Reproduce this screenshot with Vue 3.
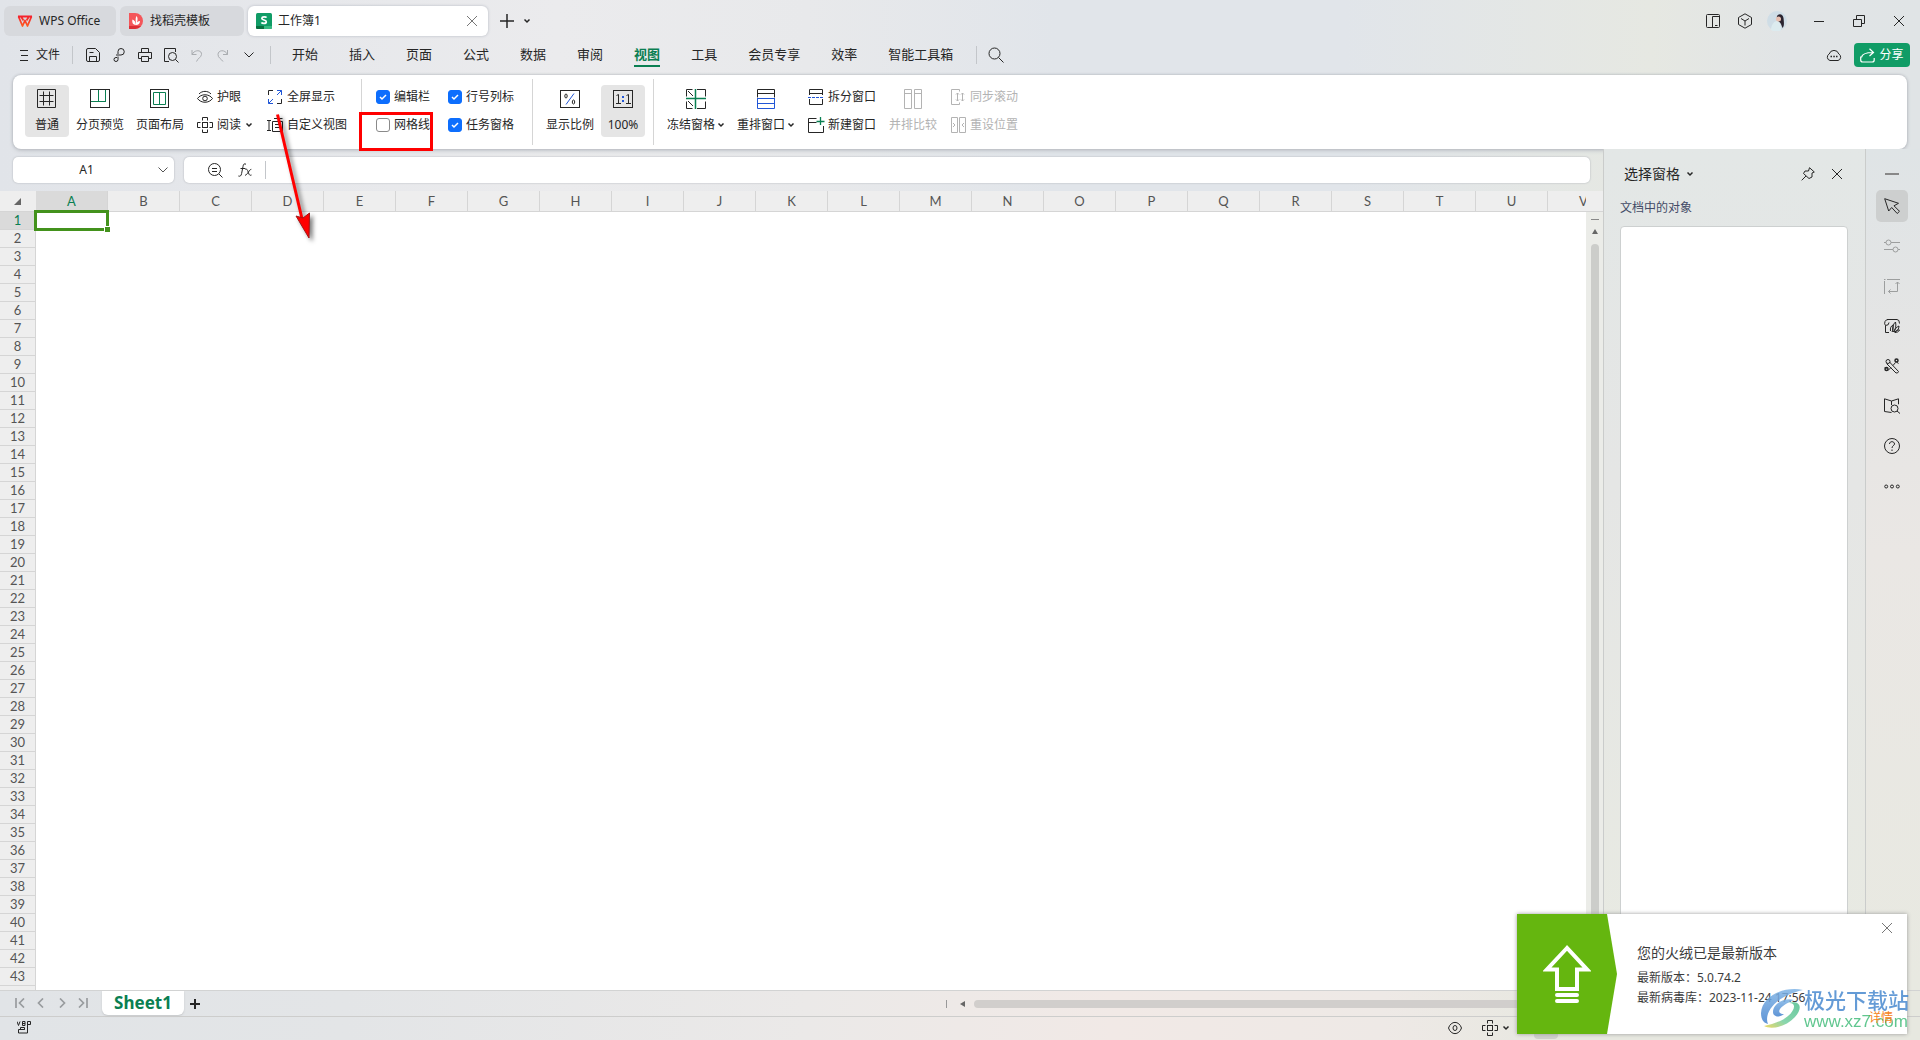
<script setup>
import { h, ref } from 'vue'

const G = '#0a7f52'
const B = '#2156d6'

// name -> [width, height, markup]
const icons = {
  wps: [16, 14, '<defs><linearGradient id="wg" x1="0" y1="0" x2="0" y2="1"><stop offset="0" stop-color="#f5222d"/><stop offset="1" stop-color="#ff5a1f"/></linearGradient></defs><path d="M1 2.500h14M1.500 2.500l4 9.500L8 6.500l2.500 5.500 4-9.500M4 2.500l2.500 4M12 2.500l-2.500 4" stroke="url(#wg)" stroke-width="1.800" stroke-linejoin="round"/>'],
  docer: [16, 16, '<path d="M1 0h6a8 8 0 0 1 0 16H1z" fill="#f4565a" stroke="none"/><path d="M1 13h12a8 8 0 0 1-6 3H1z" fill="#dc2f36" stroke="none"/><path d="M8 12C4 12 4 8 4.500 6.500 6.500 7 7.500 9 8 12zM8 12c0-4-1-6 .5-9C10 4.500 10 8 8 12zM8 12c.5-3 2-4 4-4 0 2.500-1.500 4-4 4z" fill="#fff" stroke="none"/>'],
  sheet: [16, 16, '<rect width="16" height="16" rx="1.500" fill="#109c66" stroke="none"/><path d="M0 13h8v3H1.500A1.500 1.500 0 0 1 0 14.500z" fill="#07703f" stroke="none"/><path d="M8 13h8v1.500a1.500 1.500 0 0 1-1.500 1.500H8z" fill="#37b981" stroke="none"/><path d="M10.500 4.700C10 3.600 6 3.200 5.800 5.300 5.700 7.500 10.400 6.600 10.300 8.900 10.200 11 6 10.700 5.500 9.400" stroke="#fff" stroke-width="1.700"/>'],
  x: [12, 12, '<path d="M1 1l10 10M11 1L1 11"/>'],
  plus: [14, 14, '<path d="M7 0v14M0 7h14" stroke-width="1.500"/>'],
  plusBold: [10, 10, '<path d="M5 0v10M0 5h10" stroke-width="2"/>'],
  down: [8, 6, '<path d="M1.500 1.500L4 4l2.500-2.500" stroke-width="1.500"/>'],
  downWide: [10, 6, '<path d="M.5.5L5 5 9.500.5"/>'],
  burger: [8, 12, '<path d="M0 1.500h8M1 6.500h7M0 11.500h8"/>'],
  save: [14, 14, '<path d="M.5 12V2Q.5.5 2 .5h7.500l4 4V12q0 1.500-1.500 1.500H2Q.5 13.500.5 12zM3.500 13V8.500h7V13M3.500 4.500h4"/>'],
  link: [12, 14, '<path d="M4 9.500H3A2 2 0 1 0 5 11.500V8.500M5 6V3.500Q5 .5 8 .5a3 3 0 0 1 0 6.500H3"/>'],
  print: [14, 14, '<path d="M3.500 4V.5h7V4M3.500 10.500H.5v-6h13v6h-3M3.500 8.500h7v5h-7z"/>'],
  preview: [15, 15, '<path d="M5 13.500H.5V.5h11V4"/><circle cx="8.500" cy="8.500" r="4"/><path d="M11.500 11.500l3 3"/>'],
  undo: [12, 13, '<path d="M1 1v4.500h4.500M1 5.500C4 0 11 1 10.500 5.500 10 8.500 7 9 5.500 12.500"/>'],
  redo: [12, 13, '<path d="M10.500 1v4.500H6M10.500 5.500C8 0 1 1 1 5.500 1 9 4 9.500 6 12.500"/>'],
  search: [16, 16, '<circle cx="6.500" cy="6.500" r="5.500"/><path d="M10.500 10.500l5 5"/>'],
  panels: [14, 14, '<rect x=".5" y=".5" width="13" height="13" rx="1"/><path d="M6.500 13.500v-11h7M9 11.500h2.500"/>'],
  cube: [16, 16, '<path d="M8 .8l6.500 3.700v7L8 15.200 1.500 11.500v-7zM4 5.500L8 8l4-2.500M8 8v4.500"/>'],
  avatar: [20, 20, '<circle cx="10" cy="10" r="10" fill="#cfdde6" stroke="none"/><path d="M4 19c0-5 3-9 6-9s4 5 4 9.200A10 10 0 0 1 4 19z" fill="#dcebef" stroke="none"/><path d="M10 5c2-3 6-2 6.500 2s1 8-1 10c-1-2-1-4-3-6-2-1-3-3-2.500-6z" fill="#2b2430" stroke="none"/><circle cx="11.500" cy="8" r="2.500" fill="#e7bfb0" stroke="none"/>'],
  min: [10, 10, '<path d="M0 5.500h10"/>'],
  restore: [12, 12, '<path d="M.5 4.500h8v7h-8zM3.500 4V.5h8v8H9"/>'],
  cloud: [16, 14, '<path d="M4 12.500a3.500 3.500 0 0 1-.8-6.500 5 5 0 0 1 9.600 0 3.500 3.500 0 0 1-.8 6.500z"/><path d="M4.500 8.500h1.500M7.300 8.500h1.500M10 8.500h1.500" stroke-width="1.500"/>'],
  share: [15, 15, '<path d="M.7 8.500v3.500q0 2 2 2h9.500q2 0 2-2v-2M1.500 9.500C2 5.500 6 4.500 13 4.500M9.500.7l4 3.800-4 3.500" stroke-width="1.200"/>'],
  grid: [20, 20, '<path d="M.5.5h18v18H.5zM6.500 2.500v14M12.500 2.500v14M2.500 6.500h14M2.500 12.500h14"/>'],
  pageBreak: [20, 20, `<rect x=".5" y=".5" width="19" height="18"/><path d="M8.500 1v11M15.500 1v11M1 12.500h15" stroke="${G}"/>`],
  pageLayout: [20, 20, `<rect x=".5" y=".5" width="18" height="18"/><path d="M3.500 3.500h12v12h-12zM9.500 3.500v12" stroke="${G}"/>`],
  eyeCare: [16, 14, '<path d="M.5 8.500C4 3.500 12 3.500 15.500 8.500 12 13.500 4 13.500.5 8.500zM2 4C5 .5 11 .5 14 4"/><circle cx="8" cy="8.500" r="2.300"/>'],
  cross: [16, 16, '<rect x="5.500" y="5.500" width="5" height="5"/><path d="M5.500 3.500v-3h5v3M5.500 12.500v3h5v-3M3.500 5.500h-3v5h3M12.500 5.500h3v5h-3"/>'],
  full: [14, 14, `<path d="M.5 5V.5H5M9 13.500h4.500V9"/><path d="M9 .5h4.500V5M13.500.5L9 5M5 13.500H.5V9M.5 13.500L5 9" stroke="${B}"/>`],
  custom: [16, 14, '<path d="M0 2.500h4M2 2.500v10M0 12.500h4M5.500 3.500h10v10h-10zM7 .5h8.500M8 6.500h5M8 9.500h5"/>'],
  percent: [20, 18, `<rect x=".5" y=".5" width="19" height="17"/><path d="M14 3.500L6 14.500" stroke="${B}"/><ellipse cx="6" cy="6" rx="1.200" ry="2"/><ellipse cx="13.500" cy="12" rx="1.200" ry="2"/>`],
  oneone: [20, 18, `<rect x=".5" y=".5" width="19" height="17"/><path d="M3.500 5.500l2-1v9M3 13.500h5M13.500 5.500l2-1v9M13 13.500h5"/><path d="M10 6v2M10 10v2" stroke="${B}" stroke-width="2"/>`],
  freeze: [20, 20, `<path d="M.5 7.500v-7h6M11 .5h8.500v7M.5 12.500v7h6M11 19.500h8.500v-7M2 2l5 5M2 12l5 5"/><path d="M9.500 0v20M0 9.500h20" stroke="${G}" stroke-width="1.500"/>`],
  arrange: [18, 20, `<path d="M.5 8.500v-8h17v8M.5 4.500h17"/><path d="M0 9.500h18M.5 9.500v10h17v-10M.5 14.500h17" stroke="${B}"/>`],
  split: [16, 16, `<path d="M1.500 6V.5h13V6M1.500 4.500h13M1.500 10v5.500h13V10"/><path d="M0 8.500h16" stroke="${B}" stroke-dasharray="3 1"/>`],
  newWin: [17, 16, `<path d="M8.500 1.500h-8v14h15V9M.5 5.500h8"/><path d="M12.500 0v8M8.500 4.500h8" stroke="${G}" stroke-width="1.300"/>`],
  compare: [18, 20, '<path d="M.5.5h7v19h-7zM10.500.5h7v19h-7zM.5 4.500h7M10.500 4.500h7"/>'],
  sync: [14, 16, '<path d="M8.500 2.500v-2h-8v15h8v-2M6.500 4v8M5 5.500L6.500 4 8 5.500M5 10.500L6.500 12 8 10.500M11.500 4v8M10 5.500L11.500 4 13 5.500M10 10.500l1.500 1.500 1.500-1.500"/>'],
  reset: [15, 16, '<path d="M.5.5h6v15h-6zM8.500.5h6v15h-6zM2 6l2 2-2 2M13 6l-2 2 2 2"/>'],
  zoomOut: [15, 15, '<circle cx="6.500" cy="6.500" r="6"/><path d="M4 5.500h5M4 8.500h5M11 11l3.500 3.500"/>'],
  fx: [14, 14, '<path d="M8 1.200C6 .2 5.300 1.500 5 3.500L3.600 10.500C3.200 13 2 13.600.4 13M2.500 5.500h5M7.500 6.500c2-1 2 1 3 3.500s1.500 2.500 3 2M13.300 6.300c-2 0-3.800 5.700-6.300 6"/>'],
  corner: [8, 7, '<path d="M7 0v7H0z" fill="#666" stroke="none"/>'],
  up: [6, 5, '<path d="M3 0l3 5H0z" fill="#666" stroke="none"/>'],
  left: [5, 6, '<path d="M0 3l5-3v6z" fill="#666" stroke="none"/>'],
  pin: [14, 14, '<path d="M8.500.7l4.800 4.300-2.300 1L11 10l-3 1.500L2.500 6.500 4 4h3.500zM5 9L.7 13.300"/>'],
  minus: [14, 4, '<path d="M0 2h14" stroke="#888" stroke-width="2"/>'],
  cursor: [16, 16, '<path d="M.7.7l4 12.300 3-3.500 5.500 6 2.300-2.200-5.500-5.500 4.500-2.500z"/>'],
  sliders: [16, 14, '<circle cx="4.500" cy="3.500" r="2.500"/><circle cx="11.500" cy="10.500" r="2.500"/><path d="M0 3.500h2M7 3.500h9M0 10.500h9M14 10.500h2"/>'],
  resize: [16, 16, '<path d="M3 1.500h13M.5 3v13M0 1.500h1.500M13.500 4v9.500h-9M11.500 6l2-2 2 2M6.500 11.500l-2 2 2 2"/>'],
  cut: [16, 16, '<path d="M1.500 7.500v7H5M3 1.500h10q2.500 0 2.500 4M1.500 7.500Q0 6 1 3.500 2 1.500 4 1.500M1.500 7.500q3.500 0 3.500-3"/><path d="M6.500 13c-.5-3 .5-5 2.500-6 .5 3 0 5-1 7M9 14c-1-4 0-8 2.500-10 1 4 0 8-2.500 10zM10.500 14c0-3 2-5 4.500-6 0 3-1.500 5-4.500 6zM11 14.500c1-2 3-3 4.500-2.500-1 2-2.500 2.500-4.500 2.500z"/>'],
  tools: [16, 16, '<path d="M2.500 5.500l9.500 9.500q2 .5 2.500-1.500L5.500 4"/><circle cx="4" cy="3.500" r="2"/><circle cx="12.500" cy="2.500" r="1.500" stroke-width="1.500"/><circle cx="2.500" cy="11" r="1.500" stroke-width="1.500"/><path d="M4 12.500l3-3M9 7.500l2.500-3M12.500 4l2 1.500M1 9.500l1.500 1.500"/>'],
  book: [17, 16, '<path d="M7.500 14.500l-7-1V.8L7.500 3l7-2.200v5.500M7.500 3v4"/><circle cx="10.500" cy="10.500" r="3.500"/><path d="M13 13l3 2.500"/>'],
  help: [16, 16, '<circle cx="8" cy="8" r="7.500"/><path d="M5.500 6C5.500 2.800 10.500 3 10.500 6 10.500 7.500 8 7.800 8 10M8 11.500V13"/>'],
  more: [16, 5, '<circle cx="2.200" cy="2.500" r="1.500"/><circle cx="8" cy="2.500" r="1.500"/><circle cx="13.800" cy="2.500" r="1.500"/>'],
  first: [10, 10, '<path d="M1 0v10M9 .5L4.500 5 9 9.500" stroke-width="1.700"/>'],
  prev: [10, 10, '<path d="M7 .5L2.500 5 7 9.500" stroke-width="1.700"/>'],
  next: [10, 10, '<path d="M3 .5L7.500 5 3 9.500" stroke-width="1.700"/>'],
  last: [10, 10, '<path d="M9 0v10M1 .5L5.500 5 1 9.500" stroke-width="1.700"/>'],
  macro: [14, 13, '<path d="M0 .5l1.500 4L3 .5M5.500.5v4h2.500v-4zM5.500 2.500H8M10.500 9V.5h3v3h-3M3.500 6.500h4v2h-4zM1.500 8.500h6M1.500 8.500v3.500h9V9"/>'],
  eye: [14, 14, '<path d="M.5 7C3-.5 11-.5 13.500 7 11 14.500 3 14.500.5 7z"/><ellipse cx="7" cy="7" rx="2" ry="2.500"/>'],
  update: [48, 60, '<path d="M24 4L4 25.500h10V45h20V25.500h10z" stroke-width="4"/><path d="M14 51h20M14 57h20" stroke-width="4" stroke-linecap="round"/>'],
}
const Ico = ({ n }) => {
  const [w, ht, m] = icons[n]
  return h('svg', { width: w, height: ht, viewBox: `0 0 ${w} ${ht}`, fill: 'none', stroke: 'currentColor', 'aria-hidden': 'true', innerHTML: m })
}
Ico.props = ['n']

const menus = ['开始', '插入', '页面', '公式', '数据', '审阅', '视图', '工具', '会员专享', '效率', '智能工具箱']
const quick = ['save', 'link', 'print', 'preview', 'undo', 'redo']
const columns = 'ABCDEFGHIJKLMNOPQRSTUV'.split('')
const rail = ['cursor', 'sliders', 'resize', 'cut', 'tools', 'book', 'help', 'more']
const checks = ref([
  { id: 'bar', label: '编辑栏', on: true },
  { id: 'head', label: '行号列标', on: true },
  { id: 'lines', label: '网格线', on: false },
  { id: 'pane', label: '任务窗格', on: true },
])
</script>

<template>
  <div class="app">
    <header class="titlebar">
      <button class="tab home"><Ico n="wps" />WPS Office</button>
      <button class="tab docer"><Ico n="docer" />找稻壳模板</button>
      <div class="tab active"><Ico n="sheet" /><span>工作簿1</span><button class="close" aria-label="关闭"><Ico n="x" /></button></div>
      <button class="add" aria-label="新建"><Ico n="plus" /></button>
      <button aria-label="更多标签"><Ico n="down" /></button>
      <div class="window">
        <button aria-label="侧栏"><Ico n="panels" /></button>
        <button aria-label="应用"><Ico n="cube" /></button>
        <button aria-label="账户"><Ico n="avatar" /></button>
        <button aria-label="最小化"><Ico n="min" /></button>
        <button aria-label="还原"><Ico n="restore" /></button>
        <button aria-label="关闭窗口"><Ico n="x" /></button>
      </div>
    </header>

    <nav class="menubar">
      <button class="file"><Ico n="burger" />文件</button>
      <i class="bar"></i>
      <div class="quick">
        <button v-for="q in quick" :key="q" :class="{ off: q === 'undo' || q === 'redo' }" :aria-label="q"><Ico :n="q" /></button>
        <button aria-label="自定义"><Ico n="downWide" /></button>
      </div>
      <i class="bar"></i>
      <div class="menus">
        <button v-for="m in menus" :key="m" :class="{ current: m === '视图' }">{{ m }}</button>
      </div>
      <i class="bar"></i>
      <button class="find" aria-label="搜索"><Ico n="search" /></button>
      <div class="right">
        <button aria-label="云"><Ico n="cloud" /></button>
        <button class="share"><Ico n="share" />分享</button>
      </div>
    </nav>

    <section class="ribbon">
      <div class="group views">
        <button class="big pressed"><Ico n="grid" /><span>普通</span></button>
        <button class="big"><Ico n="pageBreak" /><span>分页预览</span></button>
        <button class="big"><Ico n="pageLayout" /><span>页面布局</span></button>
        <div class="stack">
          <button class="small"><span class="slot"><Ico n="eyeCare" /></span>护眼</button>
          <button class="small"><span class="slot"><Ico n="cross" /></span>阅读<Ico n="down" class="caret" /></button>
        </div>
        <div class="stack">
          <button class="small"><span class="slot"><Ico n="full" /></span>全屏显示</button>
          <button class="small"><span class="slot"><Ico n="custom" /></span>自定义视图</button>
        </div>
      </div>
      <div class="group checks">
        <label v-for="c in checks" :key="c.id" :for="c.id"><input :id="c.id" v-model="c.on" type="checkbox">{{ c.label }}</label>
      </div>
      <div class="group scale">
        <button class="big"><Ico n="percent" /><span>显示比例</span></button>
        <button class="big pressed"><Ico n="oneone" /><span>100%</span></button>
      </div>
      <div class="group windows">
        <button class="big"><Ico n="freeze" /><span>冻结窗格<Ico n="down" class="caret" /></span></button>
        <button class="big"><Ico n="arrange" /><span>重排窗口<Ico n="down" class="caret" /></span></button>
        <div class="stack">
          <button class="small"><span class="slot"><Ico n="split" /></span>拆分窗口</button>
          <button class="small"><span class="slot"><Ico n="newWin" /></span>新建窗口</button>
        </div>
        <button class="big" disabled><Ico n="compare" /><span>并排比较</span></button>
        <div class="stack">
          <button class="small" disabled><span class="slot"><Ico n="sync" /></span>同步滚动</button>
          <button class="small" disabled><span class="slot"><Ico n="reset" /></span>重设位置</button>
        </div>
      </div>
    </section>

    <main class="work">
      <section class="editor">
        <div class="formula">
          <div class="name"><input value="A1" aria-label="名称框"><Ico n="downWide" /></div>
          <div class="entry">
            <button aria-label="缩小"><Ico n="zoomOut" /></button>
            <button aria-label="插入函数"><Ico n="fx" /></button>
            <i class="bar"></i>
            <input aria-label="编辑栏">
          </div>
        </div>
        <div class="colheads">
          <div class="corner"><Ico n="corner" /></div>
          <div class="cols"><div v-for="c in columns" :key="c" class="col" :class="{ sel: c === 'A' }">{{ c }}</div></div>
          <div class="gutter"></div>
        </div>
        <div class="body">
          <div class="rows"><div v-for="r in 43" :key="r" class="row" :class="{ sel: r === 1 }">{{ r }}</div></div>
          <div class="cells"><div class="cell"></div></div>
          <div class="vscroll"><i class="dash"></i><Ico n="up" /><i class="thumb"></i></div>
        </div>
      </section>
      <aside class="pane">
        <div class="pane-head"><button class="pane-title">选择窗格<Ico n="down" class="caret" /></button><button aria-label="固定"><Ico n="pin" /></button><button aria-label="关闭窗格"><Ico n="x" /></button></div>
        <p>文档中的对象</p>
        <div class="objects"></div>
      </aside>
      <aside class="rail">
        <button class="collapse" aria-label="收起"><Ico n="minus" /></button>
        <button v-for="i in rail" :key="i" :class="{ on: i === 'cursor', dim: i === 'sliders' || i === 'resize' }" :aria-label="i"><Ico :n="i" /></button>
      </aside>
    </main>

    <footer>
      <div class="sheets">
        <div class="nav">
          <button v-for="n in ['first', 'prev', 'next', 'last']" :key="n" :aria-label="n"><Ico :n="n" /></button>
        </div>
        <button class="sheet">Sheet1</button>
        <button class="new" aria-label="新建工作表"><Ico n="plusBold" /></button>
        <div class="hscroll"><i class="tick"></i><Ico n="left" /><i class="track"></i></div>
      </div>
      <div class="status">
        <button aria-label="宏"><Ico n="macro" /></button>
        <div class="modes">
          <button aria-label="护眼模式"><Ico n="eye" /></button>
          <button aria-label="阅读模式"><Ico n="cross" /><Ico n="down" class="caret" /></button>
          <i class="mode-on"></i>
        </div>
      </div>
    </footer>

    <div class="mark-box"></div>
    <svg class="mark-arrow" width="60" height="140" viewBox="0 0 60 140" aria-hidden="true">
      <path d="M7.500 8.500L33 117" stroke="#f00" stroke-width="3" fill="none" />
      <path d="M26 110l7 2 6.500-5-.5 25z" fill="#f00" stroke="#a51515" />
    </svg>

    <section class="toast">
      <div class="toast-art"><Ico n="update" /></div>
      <div class="toast-text">
        <h2>您的火绒已是最新版本</h2>
        <p>最新版本：5.0.74.2</p>
        <p>最新病毒库：2023-11-24 17:56</p>
      </div>
      <button class="toast-close" aria-label="关闭通知"><Ico n="x" /></button>
      <a class="detail" href="#">详情</a>
      <div class="brand">
        <svg width="44" height="42" viewBox="0 0 44 42" aria-hidden="true">
          <defs>
            <linearGradient id="bl" x1="0" y1="0" x2="0" y2="1"><stop offset="0" stop-color="#7fb4e6" /><stop offset="1" stop-color="#4583cf" /></linearGradient>
            <linearGradient id="gr" x1="1" y1="0" x2="0" y2="1"><stop offset="0" stop-color="#4fbf8e" /><stop offset=".6" stop-color="#74cfa0" /><stop offset="1" stop-color="#f0d44a" /></linearGradient>
          </defs>
          <path d="M43 2C24-2 2 8 1 25c0 7 3 10 7 11C4 27 12 9 43 2z" fill="url(#bl)" />
          <path d="M34 12C24 9 13 16 13 24c0 5 7 6 11 2-4 0-6-2-4-5 3-4 9-7 14-9z" fill="url(#bl)" />
          <path d="M28 15c9-1 7 7 0 13C21 34 12 36 4 38c7 4 22 1 31-9 8-9 6-17-7-14z" fill="url(#gr)" />
        </svg>
        <div><b>极光下载站</b><span>www.xz7.com</span></div>
      </div>
    </section>
  </div>
</template>

<style>
body { margin: 0; }
</style>

<style scoped>
.app {
  height: 100vh;
  display: flex;
  flex-direction: column;
  position: relative;
  overflow: hidden;
  font-family: "Noto Sans", "Noto Sans CJK SC", sans-serif;
  font-size: 12px;
  line-height: 16px;
  color: #262626;
  background: linear-gradient(90deg, #e1e4e9 0%, #ebebed 29%, #e8e9eb 42%, #e1e5ea 55%, #e1e5ea 70%, #e6e8e2 86%, #e1e4e6 93%, #e0e4e6 100%);
}
button { font: inherit; color: inherit; border: 0; background: none; padding: 0; display: flex; align-items: center; justify-content: center; white-space: nowrap; }
svg { flex: none; display: block; }
i { display: block; flex: none; }
input { font: inherit; color: inherit; border: 0; outline: 0; background: none; padding: 0; min-width: 0; }
.bar { width: 1px; height: 18px; background: #c3c6ca; }

.titlebar { display: flex; align-items: center; height: 30px; padding: 6px 14px 4px 4px; flex: none; }
.tab { height: 30px; box-sizing: border-box; border-radius: 6px; display: flex; align-items: center; justify-content: flex-start; gap: 6px; margin-right: 4px; background: #d7d9dd; }
.home { width: 112px; padding-left: 13px; }
.docer { width: 124px; padding-left: 8px; }
.tab.active { width: 240px; padding: 0 10px 0 8px; background: #fff; box-shadow: 0 0 3px #b4b8c0; }
.close { margin-left: auto; color: #777; }
.add { margin: 0 9px 0 8px; }
.window { margin-left: auto; display: flex; }
.window button { width: 32px; height: 28px; }
.window button:nth-child(n+4) { width: 40px; }
.window button:nth-child(4) { margin-left: 6px; }
.window button:last-child { margin-right: -13px; }

.menubar { display: flex; align-items: center; height: 35px; box-sizing: border-box; flex: none; padding: 0 10px 5px 20px; }
.file { gap: 8px; margin-right: 12px; }
.quick { display: flex; margin: 0 8px 0 7px; }
.quick button { width: 26px; }
.off { color: #a9acb0; }
.menus { display: flex; gap: 31px; margin: 0 23px 0 21px; font-size: 13px; }
.menus button { height: 24px; border-bottom: 2px solid transparent; box-sizing: border-box; }
.menus .current { color: #0a7f52; font-weight: 700; border-bottom-color: #0a7f52; }
.find { margin-left: 11px; }
.right { margin-left: auto; display: flex; align-items: center; gap: 12px; }
.share { width: 56px; height: 24px; border-radius: 4px; background: #109c66; color: #fff; gap: 4px; }

.ribbon { flex: none; display: flex; height: 66px; margin: 0 13px; padding: 4px 12px; border-radius: 8px; background: #fff; box-shadow: 0 0 3px #a9adb3, 0 2px 4px #c8cbd0; }
.group { display: flex; align-items: flex-start; padding: 6px 0; box-sizing: border-box; height: 66px; }
.group + .group { border-left: 1px solid #d5d5d5; }
.big { flex-direction: column; justify-content: flex-start; height: 52px; box-sizing: border-box; padding-top: 4px; min-width: 44px; border-radius: 4px; }
.big svg { height: 20px; }
.big > span { display: flex; align-items: center; margin-top: 8px; }
.big .caret { margin-left: 2px; }
.pressed { background: #e5e5e5; }
.caret { height: 6px !important; margin-left: 4px; }
.stack { display: flex; flex-direction: column; gap: 4px; }
.small { height: 24px; justify-content: flex-start; }
.slot { width: 16px; display: flex; justify-content: center; margin-right: 4px; }
button:disabled { color: #b3b3b3; }
.views { width: 336px; }
.views .big + .big { margin-left: 7px; }
.views .big:nth-child(3) { margin-left: 12px; }
.views .stack { margin-left: 13px; }
.views .stack + .stack { margin-left: 14px; }
.checks.group { display: grid; grid-template-columns: 72px 68px; grid-template-rows: 24px 24px; row-gap: 4px; width: 171px; padding-left: 14px; align-items: center; }
.checks label { display: flex; align-items: center; gap: 4px; white-space: nowrap; }
.checks input { appearance: none; width: 14px; height: 14px; margin: 0; border: 1px solid #8a8a8a; border-radius: 3px; box-sizing: border-box; background: #fff; }
.checks input:checked { border-color: #0d6efd; background: #0d6efd url("data:image/svg+xml,%3Csvg xmlns='http://www.w3.org/2000/svg' viewBox='0 0 12 12'%3E%3Cpath d='M3 6l2 2 4-4' fill='none' stroke='white' stroke-width='1.500'/%3E%3C/svg%3E"); }
.scale { width: 121px; padding-left: 13px; gap: 7px; }
.windows { padding-left: 13px; }
.windows .big + .big { margin-left: 12px; }
.windows .stack { margin-left: 13px; }
.windows .stack + .big { margin-left: 13px; }

.work { flex: 1; min-height: 0; display: flex; }
.editor { flex: 1; min-width: 0; display: flex; flex-direction: column; }
.formula { display: flex; gap: 10px; padding: 8px 13px; flex: none; }
.name, .entry { height: 26px; background: #fff; border-radius: 5px; box-shadow: 0 0 2px #a9adb3; display: flex; align-items: center; }
.name { width: 161px; box-sizing: border-box; padding: 0 6px 0 2px; color: #555; }
.name input { flex: 1; text-align: center; color: #262626; }
.entry { flex: 1; padding-left: 24px; box-sizing: border-box; }
.entry button { margin-right: 15px; }
.entry button + button { margin-right: 13px; }
.entry input { flex: 1; }
.colheads { display: flex; height: 21px; flex: none; background: #eee; font: 13px/20px Lato, sans-serif; color: #555; }
.corner { width: 36px; flex: none; display: flex; align-items: center; justify-content: center; border-bottom: 1px solid #d5d5d5; box-sizing: border-box; }
.cols { flex: 1; min-width: 0; overflow: hidden; display: flex; }
.col { width: 72px; flex: none; box-sizing: border-box; text-align: center; border-right: 1px solid #d5d5d5; border-bottom: 1px solid #d5d5d5; }
.gutter { width: 17px; flex: none; border-bottom: 1px solid #d5d5d5; box-sizing: border-box; }
.sel { background: #dadada; color: #0a7f52; }
.body { flex: 1; min-height: 0; display: flex; }
.rows { width: 36px; flex: none; box-sizing: border-box; overflow: hidden; border-right: 1px solid #d5d5d5; background: #eee; font: 13px/17px Lato, sans-serif; color: #555; }
.row { height: 18px; box-sizing: border-box; text-align: center; border-bottom: 1px solid #d5d5d5; }
.row.sel { color: #0a7f52; }
.cells { flex: 1; background: #fff; }
.cell { position: relative; width: 75px; height: 21px; box-sizing: border-box; margin: -2px 0 0 -2px; border: 3px solid #43921c; }
.cell::after { content: ""; position: absolute; right: -4px; bottom: -4px; width: 5px; height: 5px; background: #43921c; border-left: 1px solid #fff; border-top: 1px solid #fff; }
.vscroll { width: 17px; flex: none; display: flex; flex-direction: column; align-items: center; background: #ebece8; padding-top: 7px; box-sizing: border-box; }
.dash { width: 8px; height: 1px; background: #888; margin-bottom: 9px; }
.thumb { flex: 1; width: 8px; border-radius: 4px; background: #cccdca; margin: 10px 0 20px; }

.pane { width: 262px; flex: none; box-sizing: border-box; border-left: 1px solid #cacccb; padding: 12px 17px 0 16px; display: flex; flex-direction: column; background: linear-gradient(180deg, #e3e7e6 0%, #e5e6e5 40%, #e8eae2 100%); }
.pane-head { display: flex; align-items: center; height: 26px; padding: 0 5px 0 4px; gap: 16px; }
.pane-title { margin-right: auto; font-size: 14px; gap: 2px; }
.pane p { margin: 13px 0 10px; color: #434b66; }
.objects { flex: 1; background: #fff; border: 1px solid #cdd0d0; border-radius: 4px; margin-bottom: 12px; }
.rail { width: 55px; flex: none; box-sizing: border-box; border-left: 1px solid #cacccb; padding-right: 2px; display: flex; flex-direction: column; align-items: center; gap: 8px; background: linear-gradient(180deg, #dfe4e6 0%, #e6e5e4 28%, #eae7e4 48%, #e8e9e1 100%); }
.rail button { width: 32px; height: 32px; flex: none; border-radius: 5px; }
.rail .collapse { height: 8px; margin: 21px 0 4px; }
.rail .on { background: #cdcfcf; }
.rail .dim { color: #9c9e9e; }

footer { flex: none; background: linear-gradient(90deg, #e1e4e7 0%, #e3e5e7 18%, #ebe9e8 42%, #f1e9e6 58%, #eee9e6 72%, #e7e8e0 82%, #e7e8e0 100%); }
.sheets { display: flex; height: 26px; box-sizing: border-box; border-top: 1px solid #d2d3d3; }
.nav { display: flex; gap: 11px; width: 102px; box-sizing: border-box; padding: 0 12px 2px 15px; color: #999c9e; }
.sheet { width: 82px; height: 24px; background: #fff; border-radius: 0 0 6px 6px; color: #0a7f52; font-weight: 700; font-size: 17px; box-shadow: 0 1px 2px #c4c6c8; clip-path: inset(0 -2px -3px -2px); }
.new { margin-left: 6px; width: 10px; }
.hscroll { margin-left: auto; width: 51%; display: flex; align-items: center; }
.tick { width: 1px; height: 8px; background: #999; margin: 0 13px 0 5px; }
.track { flex: 1; height: 8px; border-radius: 4px; background: #d1cecc; margin: 0 330px 0 9px; }
.status { display: flex; justify-content: space-between; height: 24px; box-sizing: border-box; border-top: 1px solid #cdcdcc; padding: 0 17px 2px 17px; }
.modes { display: flex; align-items: center; gap: 20px; width: 455px; }
.mode-on { width: 24px; height: 22px; border-radius: 4px; background: #cfd0cb; margin-left: 4px; }

.mark-box { position: absolute; left: 359px; top: 112px; width: 74px; height: 39px; box-sizing: border-box; border: 3px solid #f00; }
.mark-arrow { position: absolute; left: 270px; top: 106px; filter: drop-shadow(3px 3px 2px rgba(0, 0, 0, .5)); }
.toast { position: absolute; right: 13px; bottom: 6px; width: 390px; height: 120px; display: flex; background: #fff; box-shadow: 0 0 4px #999; color: #3c3c3c; }
.toast-art { width: 100px; flex: none; display: flex; align-items: center; justify-content: center; background: #65b60f; color: #fff; clip-path: polygon(0 0, 90px 0, 100% 50%, 90px 100%, 0 100%); }
.toast-text { padding: 28px 0 0 20px; }
.toast-text h2 { margin: 0 0 4px; font-size: 14px; line-height: 22px; font-weight: 400; }
.toast-text p { margin: 0; line-height: 20px; }
.toast-close { position: absolute; right: 14px; top: 8px; color: #777; }
.detail { position: absolute; right: 14px; bottom: 8px; color: #f58220; text-decoration: none; z-index: 1; }
.brand { position: absolute; right: -2px; bottom: 2px; display: flex; opacity: .85; }
.brand div { display: flex; flex-direction: column; }
.brand b { font-size: 21px; line-height: 24px; font-weight: 500; color: #4a8ad0; }
.brand span { font: 17px/20px "Liberation Sans", sans-serif; color: #45bd7c; }
</style>
